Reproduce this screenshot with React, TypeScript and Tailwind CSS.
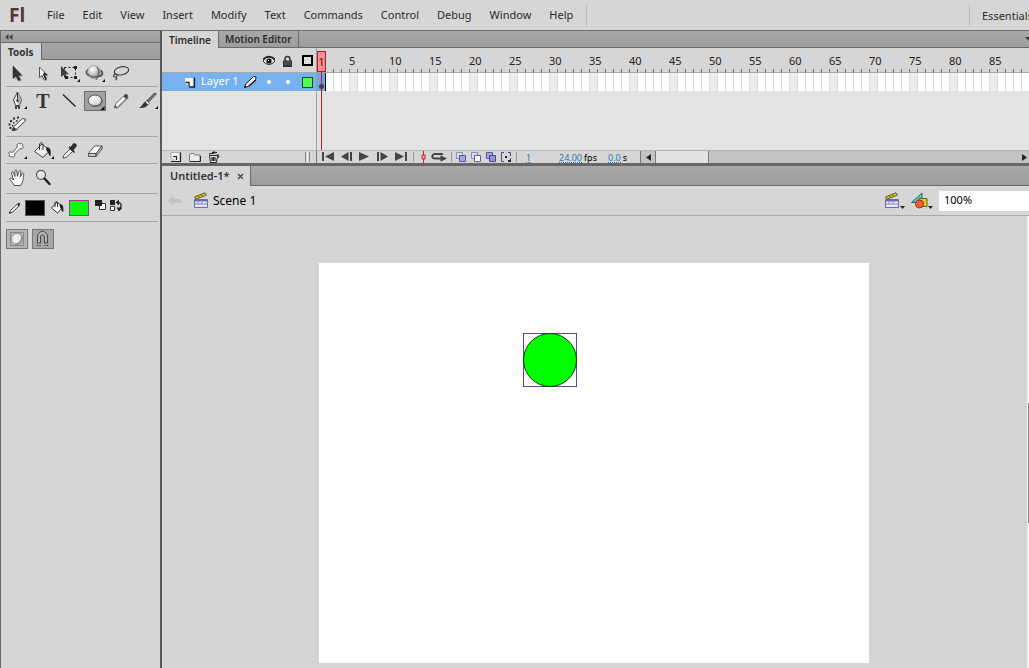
import React, { useEffect, useState } from "react";

const MENUS = ["File", "Edit", "View", "Insert", "Modify", "Text", "Commands", "Control", "Debug", "Window", "Help"];
const FRAME_WIDTH = 8;
const FRAME_OFFSET = 317;

function framesForWindow() {
  return Math.max(1, Math.ceil((window.innerWidth - FRAME_OFFSET) / FRAME_WIDTH));
}

function useFrames() {
  const [count, setCount] = useState(framesForWindow);
  useEffect(() => {
    const update = () => setCount(framesForWindow());
    window.addEventListener("resize", update);
    return () => window.removeEventListener("resize", update);
  }, []);
  return Array.from({ length: count }, (_, i) => i + 1);
}

function Icon({ w = 22, h = 22, children }: { w?: number; h?: number; children: React.ReactNode }) {
  return (
    <svg width={w} height={h} viewBox={`0 0 ${w} ${h}`} className="block shrink-0" aria-hidden="true">
      {children}
    </svg>
  );
}

const corner = <path d="M21 16v3h-3z" fill="#111" />;

function ArrowIcon() {
  return (
    <Icon>
      <path d="M9 5v12l2.500-2 2.500 4 2-1-2-4h3.500z" fill="#999" opacity=".6" />
      <path d="M7 3v12.500l3-2.500 2.200 4.800 2.300-1-2.300-4.500h3.600z" fill="#2e3333" stroke="#222" strokeWidth=".5" />
    </Icon>
  );
}

function SubselectIcon() {
  return (
    <Icon>
      <path d="M9 6v10l2-1 2.500 4 2-1-1.500-3.500h3z" fill="#999" opacity=".5" />
      <path d="M7.500 4v10.500l2.600-2 2 4.500 2-1-2-4h3.200z" fill="#fff" stroke="#444" strokeWidth=".9" />
      <path d="M11 12l2.500 5 1.500-.8-2.200-4.200h2.600L12 9z" fill="#222" />
    </Icon>
  );
}

function TransformIcon() {
  return (
    <Icon>
      <rect x="6.500" y="4.500" width="11" height="10" fill="none" stroke="#222" strokeDasharray="2 2" />
      <path d="M3 3v11l2.800-2 1.500 3.500 1.800-.8-1.500-3.500H11z" fill="#3a4040" />
      <path d="M16 3h3v3h-3zM16 13h3v3h-3zM7 13h3v3H7z" fill="#222" />
      <path d="M22 16v3h-3z" fill="#111" />
    </Icon>
  );
}

function RotateIcon() {
  return (
    <Icon>
      <defs>
        <radialGradient id="ball" cx=".38" cy=".3" r=".8">
          <stop offset="0" stopColor="#fff" />
          <stop offset=".5" stopColor="#c4c4c4" />
          <stop offset="1" stopColor="#666" />
        </radialGradient>
      </defs>
      <path d="M5 6C1 8.500 1.500 12 8 13.500c6 1 10.500-.5 10.500-3.500 0-1-1-2-2.500-3" fill="none" stroke="#555" strokeWidth="1.800" />
      <circle cx="10" cy="9" r="6.500" fill="url(#ball)" stroke="#888" strokeWidth=".6" />
      <path d="M4 11c3 3.500 9 4 13 1M13 4c2.500 4 2.500 8-1 13" fill="none" stroke="#555" strokeWidth="1" />
      {corner}
    </Icon>
  );
}

function LassoIcon() {
  return (
    <Icon>
      <ellipse cx="11.500" cy="7.800" rx="7.300" ry="4" fill="none" stroke="#444" strokeWidth="1.200" transform="rotate(-12 11.500 7.800)" />
      <path d="M5 11c-2 1-2 3 0 3s3-2 1-3M6 13.500c1.500 1 .5 2.500-.5 3.500" fill="none" stroke="#444" strokeWidth="1.200" />
    </Icon>
  );
}

function PenIcon() {
  return (
    <Icon>
      <path d="M11.500 2L7.500 10l2 5.500h4l2-5.500z" fill="#f2f2f2" stroke="#444" />
      <path d="M12 3l3 7-1.500 5H12z" fill="#b5b5b5" />
      <path d="M11.500 2v8" stroke="#333" />
      <circle cx="11.500" cy="10.800" r="1.200" fill="#333" />
      <path d="M9 16h5v3H9z" fill="#444" />
      <path d="M11 17h1v2h-1z" fill="#ddd" />
      {corner}
    </Icon>
  );
}

function LineIcon() {
  return (
    <Icon>
      <path d="M5 4.500l12.500 12" stroke="#222" strokeWidth="1.400" />
    </Icon>
  );
}

function OvalIcon() {
  return (
    <Icon>
      <defs>
        <radialGradient id="oval" cx=".4" cy=".35" r=".75">
          <stop offset="0" stopColor="#fff" />
          <stop offset=".6" stopColor="#e0e0e0" />
          <stop offset="1" stopColor="#aaa" />
        </radialGradient>
      </defs>
      <ellipse cx="12" cy="11.500" rx="7" ry="5.500" fill="#6e6e6e" opacity=".7" />
      <ellipse cx="11" cy="10.500" rx="6.800" ry="5.500" fill="url(#oval)" stroke="#444" strokeWidth=".9" />
      <path d="M20.500 16v4h-4z" fill="#111" />
    </Icon>
  );
}

function PencilIcon() {
  return (
    <Icon>
      <path d="M6 18.500l12-11" stroke="#999" strokeWidth="2" />
      <path d="M4.500 17.500l1.200-3.800 9.300-9 2.500.3.300 2.500-9.300 9.300z" fill="#f6f6f6" stroke="#555" strokeWidth=".9" />
      <path d="M7.500 16.500L16 8.500" stroke="#aaa" />
      <path d="M4.500 18l.8-2.500 1.700 1.700zM13.500 6.500l2.500 2.500 1.800-1.500-.3-2.700-2.500-.3z" fill="#444" />
    </Icon>
  );
}

function BrushIcon() {
  return (
    <Icon>
      <path d="M18.500 3l1.800.8-8.500 9.200-1.700-1.500z" fill="#777" stroke="#333" strokeWidth=".8" />
      <path d="M10.500 10.500l3 2.800-1.500 1.500-3-2.800z" fill="#eee" stroke="#444" strokeWidth=".7" />
      <path d="M9 12l3 2.800c-2 3-5.500 3.500-9 3 3-1 3.500-4.500 6-5.800z" fill="#333" />
      <path d="M22 16v3h-3z" fill="#111" />
    </Icon>
  );
}

function SprayIcon() {
  return (
    <Icon>
      <path d="M4 7h2v2H4zM7 4.500h2v2H7zM11 3.500h2v2h-2zM2.500 10.500h2v2h-2zM3.500 14h2v2h-2zM7 9h1.500v1.500H7zM10 7h1.500v1.500H10zM6 12h1.500v1.500H6z" fill="#333" />
      <path d="M6.500 17l1-3 9-8.500 2.800.5-.3 2.200-9 8.500z" fill="#f6f6f6" stroke="#444" />
      <path d="M5.500 18l2-.2 4-.8-4-3z" fill="#333" />
    </Icon>
  );
}

function BoneIcon() {
  return (
    <Icon>
      <path d="M7.500 13.500l5-5.500c-1.500-2.500 1-4.500 2.800-3 1-1.500 3 0 2.200 1.500 1.700 1.700 0 4-2.500 3l-5.500 5.500c1 2.500-1.500 4-3 2.500-1.500 1-3-.5-2-2-1.800-1.500-.3-3.700 3-2z" fill="#fafafa" stroke="#444" strokeWidth=".9" transform="translate(-1 -1)" />
      {corner}
    </Icon>
  );
}

function BucketIcon() {
  return (
    <Icon>
      <path d="M10 4l8 6.500-7 7-8.500-6z" fill="#f2f2f2" stroke="#444" />
      <path d="M11 16.500l6-6 1.500.5-7 7z" fill="#888" />
      <path d="M7.500 10V5c0-3 3.500-3 3.500 0v5" fill="none" stroke="#333" />
      <path d="M14 7c4 0 5.500 3 4.500 9-2 0-1.500-4-4-5z" fill="#222" />
      <path d="M22 16v3h-3z" fill="#111" />
    </Icon>
  );
}

function DropperIcon() {
  return (
    <Icon>
      <path d="M5 18l1-3 6-6 2.500 2.500-6.500 6z" fill="#f4f4f4" stroke="#444" strokeWidth=".9" />
      <path d="M10.500 7.500l5.500 5.500 1-1-1.500-2 3-3.500c1-2-1.500-4-3.300-3L12.500 7l-1-.8z" fill="#2b2b2b" />
    </Icon>
  );
}

function EraserIcon() {
  return (
    <Icon>
      <path d="M4.500 13.500l6-7.500h7.500l-6 7.500z" fill="#fafafa" stroke="#444" strokeWidth=".9" />
      <path d="M4.500 13.500H12v3H4.500zM12 13.500L18 6v3l-6 7.500z" fill="#c8c8c8" stroke="#444" strokeWidth=".9" />
    </Icon>
  );
}

function HandIcon() {
  return (
    <Icon>
      <path d="M8 18.500c-1-2.500-2-3.500-4-6-.5-1.500 1-2 2-1l1.500 1.500L5.500 6c0-1.500 1.500-1.700 2-.3L9 9.500 8.800 4c.2-1.400 1.800-1.400 2 0l.6 5.300L13 4.400c.5-1.300 2-1 1.900.3L14.300 10l1.700-3.500c.8-1 2-.4 1.800.8-.4 4-.8 8-3 11.200z" fill="#fafafa" stroke="#444" strokeWidth=".9" />
    </Icon>
  );
}

function MagnifierIcon() {
  return (
    <Icon>
      <circle cx="9" cy="7.800" r="4.500" fill="#e4e4e4" stroke="#555" strokeWidth="1.200" />
      <path d="M6.500 7.500c.3-1.500 1-2 2.500-2.200" fill="none" stroke="#fff" strokeWidth="1.200" />
      <path d="M12.500 11.500l5 5.500" stroke="#222" strokeWidth="2.500" strokeLinecap="round" />
    </Icon>
  );
}

type Tool = { name: string; icon: React.ReactNode };
const TextGlyph = <span className="font-['Liberation_Serif',serif] text-[20px] font-bold leading-[20px] text-[#333]">T</span>;

const ROWS: Record<string, Tool[]> = {
  select: [
    { name: "Selection", icon: <ArrowIcon /> },
    { name: "Subselection", icon: <SubselectIcon /> },
    { name: "Free Transform", icon: <TransformIcon /> },
    { name: "3D Rotation", icon: <RotateIcon /> },
    { name: "Lasso", icon: <LassoIcon /> },
  ],
  draw: [
    { name: "Pen", icon: <PenIcon /> },
    { name: "Text tool", icon: TextGlyph },
    { name: "Line", icon: <LineIcon /> },
    { name: "Oval", icon: <OvalIcon /> },
    { name: "Pencil", icon: <PencilIcon /> },
    { name: "Brush", icon: <BrushIcon /> },
    { name: "Deco", icon: <SprayIcon /> },
  ],
  paint: [
    { name: "Bone", icon: <BoneIcon /> },
    { name: "Paint Bucket", icon: <BucketIcon /> },
    { name: "Eyedropper", icon: <DropperIcon /> },
    { name: "Eraser", icon: <EraserIcon /> },
  ],
  view: [
    { name: "Hand", icon: <HandIcon /> },
    { name: "Zoom", icon: <MagnifierIcon /> },
  ],
};

function ToolGroup({ tools, active, onPick }: { tools: Tool[]; active: string; onPick: (n: string) => void }) {
  return (
    <div className="flex flex-wrap gap-x-1 gap-y-[3px] border-b border-[#a6a6a6] pb-0.5 pt-1 last:pb-[5px]">
      {tools.map((t) => (
        <button
          key={t.name}
          aria-label={t.name}
          onClick={() => onPick(t.name)}
          className={
            active === t.name
              ? "flex h-5 w-[22px] items-center justify-center bg-[#a2a2a2] outline outline-1 -outline-offset-1 outline-[#6c6c6c]"
              : "flex h-5 w-[22px] items-center justify-center"
          }
        >
          {t.icon}
        </button>
      ))}
    </div>
  );
}

function ToolsPanel() {
  const [active, setActive] = useState("Oval");
  return (
    <aside className="w-[162px] shrink-0 border-l border-r-2 border-l-[#6a6a6a] border-r-[#595959] bg-[#d6d6d6]">
      <div className="flex h-3 items-center border-b border-[#6a6a6a] bg-linear-to-b from-[#aaa] to-[#9b9b9b] pl-1">
        <button aria-label="Collapse panel">
          <Icon w={8} h={6}>
            <path d="M3.500 0v6L0 3zM7.500 0v6L4 3z" fill="#444" />
          </Icon>
        </button>
      </div>
      <div className="flex h-[17px] bg-linear-to-b from-[#a6a6a6] to-[#9c9c9c]">
        <h2 className="border-r border-[#6a6a6a] bg-[#d6d6d6] px-[7px] text-[10px] font-bold leading-[18px] text-[#333]">Tools</h2>
        <div className="flex-1 border-b border-[#6a6a6a]" />
      </div>
      <div className="mr-0.5 pl-[5px]">
        <div>
          <ToolGroup tools={ROWS.select} active={active} onPick={setActive} />
          <ToolGroup tools={ROWS.draw} active={active} onPick={setActive} />
          <ToolGroup tools={ROWS.paint} active={active} onPick={setActive} />
          <ToolGroup tools={ROWS.view} active={active} onPick={setActive} />
        </div>
        <div className="flex h-[28px] items-center border-b border-[#a6a6a6]">
          <Icon w={19} h={16}>
            <path d="M3.500 13l1-2.500 7-6.500 2-.5-.5 2.500-7 6.500z" fill="#f6f6f6" stroke="#444" />
            <path d="M3 13.500l2-.5-1-2zM11 5l2-2 1 .5-1 2.500z" fill="#222" />
          </Icon>
          <button aria-label="Stroke color" className="h-4 w-5 border border-[#555] bg-black" />
          <div className="pl-1 pr-0.5">
            <Icon w={18} h={16}>
              <path d="M8 2l6 5-5.500 6L2.500 8z" fill="#f2f2f2" stroke="#333" />
              <path d="M6 7V3c0-2 2.500-2 2.500 0v4" fill="none" stroke="#333" />
              <path d="M10.500 4c3 0 4.500 2 3.800 8-1.800 0-1.300-3-3-4z" fill="#222" />
            </Icon>
          </div>
          <button aria-label="Fill color" className="h-4 w-5 border border-[#a03c9b] bg-[#00ff00]" />
          <button aria-label="Black and white" className="mb-1 ml-1.5">
            <Icon w={12} h={13}>
              <path d="M4.500 4.500h6v6h-6z" fill="#fff" stroke="#333" />
              <path d="M0 1h7v6H0z" fill="#222" />
            </Icon>
          </button>
          <button aria-label="Swap colors" className="mb-1 ml-[3px]">
            <Icon w={14} h={13}>
              <path d="M0 1h5v5H0z" fill="#222" />
              <path d="M.5 7.500h4v4h-4z" fill="#fff" stroke="#333" />
              <path d="M7.500 3.500c4 0 4.500 3 2.500 6" fill="none" stroke="#222" strokeWidth="1.300" />
              <path d="M9 .5v6L5.500 3.500zM6.500 8.500h6L9 12.500z" fill="#222" />
            </Icon>
          </button>
        </div>
        <div className="flex gap-1 py-[7px]">
          <button aria-label="Object drawing" className="h-5 w-[22px] border border-[#777] bg-[#b4b4b4]">
            <Icon w={20} h={18}>
              <path d="M3.500 2.500h13v13h-13z" fill="none" stroke="#888" />
              <circle cx="10" cy="9" r="5.500" fill="#eee" stroke="#888" strokeWidth=".8" />
              <path d="M14.500 6c1 4-1.500 8-6 8" fill="none" stroke="#888" strokeWidth="1.500" />
            </Icon>
          </button>
          <button aria-label="Snap to objects" className="h-5 w-[22px] border border-[#777] bg-[#a6a6a6]">
            <Icon w={20} h={18}>
              <path d="M4.500 13V7c0-7.500 10-7.500 10 0v6h-3V7c0-3-4-3-4 0v6z" fill="#b8b8b8" stroke="#444" />
              <path d="M4 15h1v1H4zM6.500 15h1v1h-1zM11.500 15h1v1h-1zM14 15h1v1h-1z" fill="#222" />
            </Icon>
          </button>
        </div>
      </div>
    </aside>
  );
}

function MenuBar() {
  return (
    <header className="flex h-[31px] items-center border-b border-[#6a6a6a] bg-[#d6d6d6] text-[11px] text-[#2b2b2b]">
      <span className="ml-[9px] w-[29px] font-['Open_Sans',sans-serif] text-[19px] font-bold leading-[27px] text-[#53393a]">Fl</span>
      <nav className="flex">
        {MENUS.map((m) => (
          <button key={m} className="px-[9px]">{m}</button>
        ))}
      </nav>
      <div className="ml-1 h-[21px] w-px bg-[#bcbcbc]" />
      <div className="flex-1" />
      <button className="h-[21px] w-[60px] shrink-0 overflow-hidden whitespace-nowrap border-l border-[#bcbcbc] pl-3 text-left text-[11px] leading-[19px]">Essentials</button>
    </header>
  );
}

function LayerColumn() {
  return (
    <div className="w-[155px] shrink-0 border-r border-[#a0a0a0]">
      <div className="flex h-[25px] items-center border-b border-[#a8a8a8] bg-[#d6d6d6] pl-[101px] pt-px">
        <Icon w={12} h={12}>
          <path d="M0 6c3-5 9-5 12 0-3 4.500-9 4.500-12 0z" fill="#ddd" stroke="#222" />
          <circle cx="6" cy="6" r="2.600" fill="#111" />
          <path d="M0 4.500c3-4 9-4 12 0" fill="none" stroke="#222" strokeWidth="1.500" />
          <path d="M5 5h1v1H5z" fill="#fff" />
        </Icon>
        <div className="ml-[7px]">
          <Icon w={11} h={12}>
            <path d="M3 6V4c0-3.500 5-3.500 5 0v2" fill="none" stroke="#333" strokeWidth="1.500" />
            <path d="M1 5.500h9V12H1z" fill="#333" />
            <path d="M2 7h7M2 9h7" stroke="#777" strokeWidth=".7" />
          </Icon>
        </div>
        <div className="ml-[9px] h-[11px] w-[11px] border-2 border-black bg-[#ddd]" />
      </div>
      <div className="flex h-[18px] items-center bg-[#78b1f0] pl-[22px] text-white">
        <Icon w={12} h={12}>
          <path d="M1 2h8v9H6L1 7z" fill="#f4f4f4" />
          <path d="M1.500 6.500H5V10M5 11h5.500V1.500" fill="none" stroke="#222" strokeWidth="1.300" />
        </Icon>
        <span className="ml-[5px] w-[42px] whitespace-nowrap pb-0.5 text-[11px] leading-[16px]">Layer 1</span>
        <Icon w={15} h={14}>
          <path d="M1.500 12.500l1.300-3.500L10.500 1.500l2.500.3-.2 2.500L5 11.500z" fill="#f4f4f4" stroke="#222" />
          <path d="M1 13l3-1-2-2zM5 11.500l8-7.200v1.500L6 12z" fill="#222" />
        </Icon>
        <div className="ml-[9px] h-1 w-1 rounded-full bg-white" />
        <div className="ml-[15px] h-1 w-1 rounded-full bg-white" />
        <button aria-label="Layer outline color" className="ml-3 h-[11px] w-[11px] border border-[#1d4a1d] bg-[#4fff4f]" />
      </div>
    </div>
  );
}

function FrameGrid() {
  const frames = useFrames();
  return (
    <div className="relative min-w-0 flex-1 overflow-hidden">
      <div className="flex h-[25px] items-stretch border-b border-[#a8a8a8] bg-[#d6d6d6]">
        {frames.map((n) => (
          <div key={n} className="flex w-2 shrink-0 flex-col justify-between">
            {n > 1 && n % 5 === 0 ? (
              <span className="h-[21px] w-4 whitespace-nowrap pt-[5px] text-[11px] leading-[16px] text-[#222]">{n}</span>
            ) : (
              <i className="h-[21px]" />
            )}
            <i className="h-[3px] w-px bg-[#777]" />
          </div>
        ))}
      </div>
      <div className="flex h-[18px] bg-white">
        {frames.map((n) => (
          <div
            key={n}
            className={
              n === 1
                ? "flex w-2 shrink-0 items-end justify-center bg-[#6fa6e6] pb-0.5"
                : n % 5 === 0
                  ? "w-2 shrink-0 border-l border-[#ddd] bg-[#ebebeb]"
                  : n === 2
                    ? "w-2 shrink-0 border-l border-black bg-white"
                    : "w-2 shrink-0 border-l border-[#dadada] bg-white"
            }
          >
            {n === 1 && <i className="h-[5px] w-[5px] rounded-full bg-[#333c66]" />}
          </div>
        ))}
      </div>
      <div className="absolute bottom-0 left-0 top-[3px] flex w-[9px] flex-col items-center">
        <div className="h-[21px] w-[9px] border border-[#b01c22] bg-[#fb8f8f] text-center text-[11px] leading-[19px] text-[#5a1010]">1</div>
        <div className="w-px flex-1 bg-[#b01c22]" />
      </div>
    </div>
  );
}

function Sep() {
  return <i className="h-2.5 w-px shrink-0 bg-[#999]" />;
}

function HotValue({ children }: { children: string }) {
  return <button className="h-[11px] border-b border-dotted border-[#2c78b4] leading-[11px] text-[#2c78b4]">{children}</button>;
}

function TimelineFooter() {
  return (
    <div className="flex h-[13px] items-center overflow-hidden border-t border-[#b5b5b5] bg-[#d6d6d6] text-[9px] leading-[11px]">
      <div className="flex h-full w-[155px] shrink-0 items-center border-r border-[#777] pl-2">
        <button aria-label="New layer">
          <Icon w={12} h={12}>
            <path d="M1 1.500h9V11H6L1 7z" fill="#f2f2f2" stroke="#888" strokeWidth=".6" />
            <path d="M3 5.500h3.500V9M1 10.500h9.500v-9" fill="none" stroke="#222" strokeWidth="1.200" />
          </Icon>
        </button>
        <button aria-label="New folder" className="ml-[7px]">
          <Icon w={12} h={12}>
            <path d="M.5 10.500v-7l1.500-1h3l1 1.500h5v6.500z" fill="#eee" stroke="#777" />
            <path d="M1 10.500h10.500V5" fill="none" stroke="#222" />
          </Icon>
        </button>
        <button aria-label="Delete" className="ml-[7px]">
          <Icon w={12} h={12}>
            <path d="M1.500 4.500h8l-1 7h-6z" fill="#eee" stroke="#222" />
            <path d="M1 3l8-1.500M4 1.500L7 .8M4 6v4M5.500 6v4M7 6v4" stroke="#222" strokeWidth="1.200" />
            <path d="M9 4c2-1 2 0 1.500 3" fill="none" stroke="#222" />
          </Icon>
        </button>
        <div className="ml-auto mr-1.5 flex gap-px">
          <i className="h-2.5 w-px bg-[#888]" />
          <i className="h-2.5 w-px bg-[#eee]" />
          <i className="h-2.5 w-px bg-[#888]" />
        </div>
      </div>
      <div className="flex shrink-0 items-center gap-[7px] pb-px pl-[5px] pr-1.5">
        <button aria-label="First frame"><Icon w={12} h={9}><path d="M0 0h2v9H0zM12 0v9L3 4.500z" fill="#444" /></Icon></button>
        <button aria-label="Step back"><Icon w={11} h={9}><path d="M7.500 0v9L0 4.500zM9 0h2v9H9z" fill="#444" /></Icon></button>
        <button aria-label="Play"><Icon w={11} h={9}><path d="M0 0l10 4.500L0 9z" fill="#444" /></Icon></button>
        <button aria-label="Step forward"><Icon w={11} h={9}><path d="M0 0h2v9H0zM3.500 0v9l7.500-4.500z" fill="#444" /></Icon></button>
        <button aria-label="Last frame"><Icon w={12} h={9}><path d="M10 0h2v9h-2zM0 0v9l9-4.500z" fill="#444" /></Icon></button>
      </div>
      <Sep />
      <button aria-label="Center frame" className="ml-[7px]">
        <Icon w={5} h={12}>
          <path d="M2.500 0v12" stroke="#cc1f2a" />
          <path d="M1 4h3v4H1z" fill="#f7b0b0" stroke="#cc1f2a" />
        </Icon>
      </button>
      <button aria-label="Loop" className="ml-[5px] mr-1">
        <Icon w={16} h={10}>
          <path d="M12 2H4.500C.2 2 .2 6.500 4.500 6.500H10" fill="none" stroke="#444" strokeWidth="1.900" />
          <path d="M9.500 3.200l6.500 3.300-6.500 3.300z" fill="#444" />
        </Icon>
      </button>
      <Sep />
      <div className="ml-1 mr-[5px] flex gap-[5px]">
        <button aria-label="Onion skin">
          <Icon w={10} h={10}>
            <path d="M.5.5h6v6h-6z" fill="#dcdcee" stroke="#8a8ac4" />
            <path d="M3.500 3.500h6v6h-6z" fill="#a4a4dc" stroke="#5a5a9c" />
          </Icon>
        </button>
        <button aria-label="Onion skin outlines">
          <Icon w={10} h={10}>
            <path d="M.5.5h6v6h-6z" fill="#dcdcee" stroke="#8a8ac4" />
            <path d="M3.500 3.500h6v6h-6z" fill="#fff" stroke="#5a5a9c" />
          </Icon>
        </button>
        <button aria-label="Edit multiple frames">
          <Icon w={10} h={10}>
            <path d="M.5.5h6v6h-6z" fill="#a4a4dc" stroke="#5a5a9c" />
            <path d="M3.500 3.500h6v6h-6z" fill="#9292d6" stroke="#44448c" />
          </Icon>
        </button>
        <button aria-label="Modify markers">
          <Icon w={10} h={10}>
            <path d="M3 .5H.5v9H3M7 .5h2.500V4M9.500 6v3.500H7" fill="none" stroke="#4a4a8c" />
            <path d="M4 4h2v2H4zM7 8h3v2H7z" fill="#222" />
          </Icon>
        </button>
      </div>
      <Sep />
      <span className="ml-[9px] w-[33px] shrink-0"><HotValue>1</HotValue></span>
      <span className="flex w-[49px] shrink-0 gap-0.5"><HotValue>24.00</HotValue>fps</span>
      <span className="flex w-[32px] shrink-0 gap-0.5"><HotValue>0.0</HotValue>s</span>
      <div className="flex h-full min-w-0 flex-1 bg-[#c3c3c3]">
        <button aria-label="Scroll left" className="flex w-4 items-center justify-center border-x border-[#777]">
          <Icon w={5} h={7}><path d="M5 0v7L0 3.500z" fill="#222" /></Icon>
        </button>
        <div className="w-[53px] border-r border-[#777] bg-[#e2e2e2]" />
        <div className="flex-1" />
        <button aria-label="Scroll right" className="pr-0.5">
          <Icon w={5} h={7}><path d="M0 0v7l5-3.500z" fill="#222" /></Icon>
        </button>
      </div>
    </div>
  );
}

function Timeline() {
  return (
    <section className="bg-[#e3e3e3]">
      <div className="flex h-[17px] bg-linear-to-b from-[#a8a8a8] to-[#9c9c9c] text-[10px] font-semibold leading-[18px] text-[#2b2b2b]">
        <button className="border-r border-[#6a6a6a] bg-[#d6d6d6] px-[7px]">Timeline</button>
        <button className="border-b border-r border-[#6a6a6a] px-1.5 leading-[17px]">Motion Editor</button>
        <div className="flex flex-1 items-center justify-end overflow-hidden border-b border-[#6a6a6a]">
          <Icon w={4} h={4}><path d="M0 0h8L4 4z" fill="#333" /></Icon>
        </div>
      </div>
      <div className="flex h-[102px]">
        <LayerColumn />
        <FrameGrid />
      </div>
      <TimelineFooter />
    </section>
  );
}

function Clapper() {
  return (
    <Icon w={16} h={17}>
      <path d="M1.500 7.500h13v8h-13z" fill="#e6e6fa" stroke="#6a6ab4" />
      <path d="M2 8h12v1.500H2z" fill="#6a6ab4" />
      <path d="M2 12h12M5 10v2M9 10v2" stroke="#8484c4" />
      <path d="M1.500 5L12 .8l1.500 2.200L3 7.200z" fill="#d8cc2c" stroke="#5a5410" strokeWidth=".9" />
      <path d="M5 3.500l1.500 2M8 2.300l1.500 2" stroke="#5a5410" />
    </Icon>
  );
}

const DropMark = () => (
  <Icon w={5} h={3}><path d="M0 0h5L2.500 3z" fill="#222" /></Icon>
);

function Document() {
  const [zoom, setZoom] = useState("100%");
  return (
    <section className="flex flex-1 flex-col border-t-[3px] border-[#666]">
      <div className="flex h-5 bg-linear-to-b from-[#a8a8a8] to-[#9c9c9c]">
        <div className="flex items-center gap-[7px] border-r border-[#6a6a6a] bg-[#d6d6d6] pl-2 pr-1.5 text-[#333]">
          <span className="text-[11px] font-semibold leading-[18px]">Untitled-1*</span>
          <button aria-label="Close document">
            <Icon w={7} h={7}><path d="M1 1l5 5M6 1L1 6" stroke="#444" strokeWidth="1.300" /></Icon>
          </button>
        </div>
        <div className="flex-1 border-b border-[#6a6a6a]" />
      </div>
      <div className="flex h-[30px] items-center border-b border-[#ababab] bg-[#d6d6d6] pl-1.5">
        <button aria-label="Back" className="mr-3">
          <Icon w={13} h={10}><path d="M5 0v3h8v4H5v3L0 5z" fill="#c2c2c2" /></Icon>
        </button>
        <Clapper />
        <span className="ml-1 text-[12px] text-black">Scene 1</span>
        <div className="flex-1" />
        <button aria-label="Edit scene" className="flex items-end">
          <Clapper />
          <DropMark />
        </button>
        <button aria-label="Edit symbols" className="ml-1.5 mr-1.5 flex items-end">
          <Icon w={17} h={17}>
            <path d="M.5 10.500L11 1v9.500z" fill="#4fd0b4" stroke="#1d6e70" />
            <path d="M8 6.500h8v8H8z" fill="#d9c933" stroke="#6b6414" />
            <circle cx="8.500" cy="12" r="4" fill="#f0603a" stroke="#a03018" />
          </Icon>
          <DropMark />
        </button>
        <input
          aria-label="Zoom level"
          value={zoom}
          onChange={(e) => setZoom(e.target.value)}
          className="h-5 w-[90px] bg-white pb-0.5 pl-[5px] text-[11px] text-black outline-none"
        />
      </div>
      <div className="flex flex-1 bg-[#d4d4d4]">
        <main className="flex flex-1 items-start justify-center pb-[5px] pt-[47px]">
          <div className="relative h-[400px] w-[550px] bg-white">
            <div className="absolute left-[204px] top-[70px] h-[54px] w-[54px] border border-[#5a4a9c]">
              <div className="-m-px h-[54px] w-[54px] rounded-full border border-[#143c14] bg-[#00ff00]" />
            </div>
          </div>
        </main>
        <div className="flex w-[3px] flex-col items-end border-l border-[#d4d4d4] bg-[#f2f2f2] pt-[187px]">
          <div className="h-[120px] w-px bg-[#888]" />
        </div>
      </div>
    </section>
  );
}

export default function App() {
  return (
    <div className="flex min-h-screen flex-col overflow-hidden bg-[#d4d4d4] font-['Noto_Sans','Open_Sans',sans-serif]">
      <MenuBar />
      <div className="flex flex-1">
        <ToolsPanel />
        <div className="flex min-w-0 flex-1 flex-col">
          <Timeline />
          <Document />
        </div>
      </div>
    </div>
  );
}
